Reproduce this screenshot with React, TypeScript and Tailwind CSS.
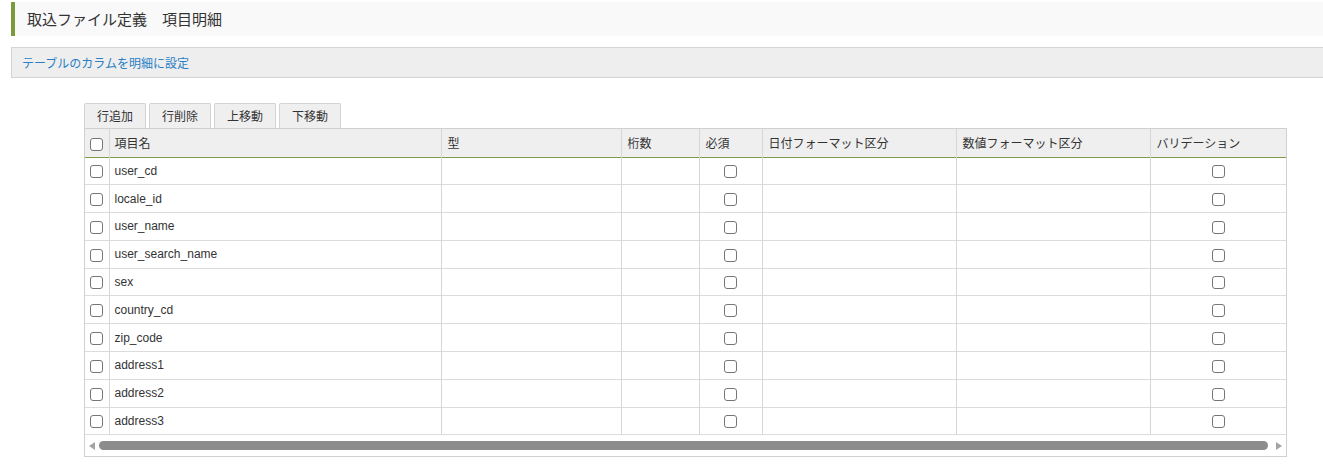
const font = { fontFamily: '"Noto Sans CJK JP", "Liberation Sans", sans-serif' }

const rows = [
  'user_cd',
  'locale_id',
  'user_name',
  'user_search_name',
  'sex',
  'country_cd',
  'zip_code',
  'address1',
  'address2',
  'address3',
]

const buttons = ['行追加', '行削除', '上移動', '下移動']

function Box() {
  return <span className="inline-block h-[13px] w-[13px] rounded-[3px] border border-[#767676] bg-white align-middle" />
}

export default function App() {
  return (
    <div className="h-[468px] w-[1323px] bg-white text-[#333]" style={{ fontFamily: '"Liberation Sans", "Noto Sans CJK JP", sans-serif' }}>
      <div className="pt-[2px] pl-[11px]">
        <div className="flex h-[34px] items-center border-l-[4px] border-[#7a9a3c] bg-[#f9f9f9] pl-[12px] text-[15px] text-[#333]" style={font}>
          取込ファイル定義　項目明細
        </div>
      </div>
      <div className="mt-[11px] pl-[11px]">
        <div className="flex h-[31px] items-center border border-r-0 border-[#d4d4d4] bg-[#eeeeee] pl-[10px] text-[12px] text-[#2a7fc4]" style={font}>
          テーブルのカラムを明細に設定
        </div>
      </div>
      <div className="ml-[84px] mt-[25px] w-[1203px]">
        <div className="flex gap-[3px]">
          {buttons.map((b) => (
            <div
              key={b}
              className="flex h-[25px] w-[62px] items-center justify-center rounded-t-[2px] border border-b-0 border-[#d3d3d3] bg-[#efefef] text-[12px] text-[#333]"
              style={font}
            >
              {b}
            </div>
          ))}
        </div>
        <div className="border border-[#d0d0d0]">
          <table className="w-full table-fixed border-collapse text-[12px]">
            <colgroup>
              <col className="w-[24px]" />
              <col className="w-[332px]" />
              <col className="w-[180px]" />
              <col className="w-[78px]" />
              <col className="w-[63px]" />
              <col className="w-[194px]" />
              <col className="w-[194px]" />
              <col />
            </colgroup>
            <thead>
              <tr className="h-[28px] border-b border-[#7d9c4a] bg-[#efefef] text-left" style={font}>
                <th className="border-r border-[#d6d6d6] text-center font-normal">
                  <Box />
                </th>
                <th className="border-r border-[#d6d6d6] pl-[5px] font-normal">項目名</th>
                <th className="border-r border-[#d6d6d6] pl-[6px] font-normal">型</th>
                <th className="border-r border-[#d6d6d6] pl-[6px] font-normal">桁数</th>
                <th className="border-r border-[#d6d6d6] pl-[6px] font-normal">必須</th>
                <th className="border-r border-[#d6d6d6] pl-[6px] font-normal">日付フォーマット区分</th>
                <th className="border-r border-[#d6d6d6] pl-[6px] font-normal">数値フォーマット区分</th>
                <th className="pl-[6px] font-normal">バリデーション</th>
              </tr>
            </thead>
            <tbody>
              {rows.map((r) => (
                <tr key={r} className="h-[27.8px] border-b border-[#dcdcdc]">
                  <td className="border-r border-[#d6d6d6] text-center">
                    <Box />
                  </td>
                  <td className="border-r border-[#d6d6d6] pl-[5px]">{r}</td>
                  <td className="border-r border-[#d6d6d6]" />
                  <td className="border-r border-[#d6d6d6]" />
                  <td className="border-r border-[#d6d6d6] text-center">
                    <Box />
                  </td>
                  <td className="border-r border-[#d6d6d6]" />
                  <td className="border-r border-[#d6d6d6]" />
                  <td className="text-center">
                    <Box />
                  </td>
                </tr>
              ))}
            </tbody>
          </table>
          <div className="flex h-[21px] items-center gap-[4px] px-[4px]">
            <svg width="6" height="8" viewBox="0 0 6 8">
              <path d="M6 0 L0 4 L6 8 Z" fill="#a3a3a3" />
            </svg>
            <div className="h-[9px] flex-1 rounded-full bg-[#8c8c8c]" />
            <svg width="6" height="8" viewBox="0 0 6 8" className="ml-[4px]">
              <path d="M0 0 L6 4 L0 8 Z" fill="#a3a3a3" />
            </svg>
          </div>
        </div>
      </div>
    </div>
  )
}
